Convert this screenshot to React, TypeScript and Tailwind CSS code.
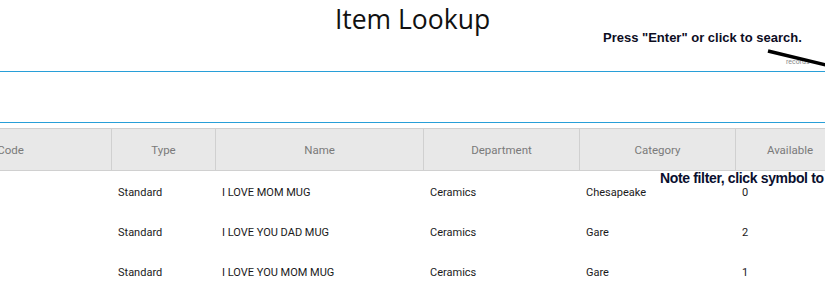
import React from "react";

const columns = [
  { label: "Code", width: "w-[202px]" },
  { label: "Type", width: "w-[104px]" },
  { label: "Name", width: "w-[208px]" },
  { label: "Department", width: "w-[156px]" },
  { label: "Category", width: "w-[156px]" },
  { label: "Available", width: "w-[108px]" },
];

const rows = [
  { code: "", type: "Standard", name: "I LOVE MOM MUG", dept: "Ceramics", cat: "Chesapeake", avail: "0" },
  { code: "", type: "Standard", name: "I LOVE YOU DAD MUG", dept: "Ceramics", cat: "Gare", avail: "2" },
  { code: "", type: "Standard", name: "I LOVE YOU MOM MUG", dept: "Ceramics", cat: "Gare", avail: "1" },
];

export default function App() {
  return (
    <div className="relative h-[301px] w-[825px] overflow-hidden bg-white font-['Roboto',sans-serif]">
      {/* title + hint */}
      <div className="relative h-[72px] border-b border-[#289fd8]">
        <h1 className="pt-[3px] text-center font-['Open_Sans',sans-serif] text-[26.5px] font-medium leading-[32px] text-[#111]">
          Item Lookup
        </h1>
        <p className="absolute left-[603px] top-[30px] font-['Liberation_Sans',Arial,sans-serif] text-[13px] font-bold leading-[16px] text-[#0d0d1f]">
          Press "Enter" or click to search.
        </p>
        <span className="absolute left-[786px] top-[58px] text-[7px] leading-[8px] text-[#888]">records</span>
        <svg className="absolute left-0 top-0" width="825" height="72" viewBox="0 0 825 72">
          <line x1="768" y1="51" x2="826" y2="65" stroke="#000" strokeWidth="3.5" />
        </svg>
      </div>

      {/* search field area */}
      <div className="h-[51px] border-b border-[#289fd8]" />

      {/* grid */}
      <div className="ml-[-90px] mt-[5px]">
        <div className="flex h-[43px] border-y border-[#d0d0d0] bg-[#e8e8e8]">
          {columns.map((c, i) => (
            <div
              key={c.label}
              className={`${c.width} flex shrink-0 items-center justify-center pt-[3px] text-[11.5px] text-[#7a7a7a] ${
                i < columns.length - 1 ? "border-r border-[#d0d0d0]" : ""
              }`}
            >
              {c.label}
            </div>
          ))}
        </div>
        <div className="pt-[2px]">
          {rows.map((r, i) => (
            <div key={i} className="flex h-[40px] items-center text-[11px] text-[#1a1a1a]">
              <div className="w-[202px] shrink-0 pl-[6px]">{r.code}</div>
              <div className="w-[104px] shrink-0 pl-[6px]">{r.type}</div>
              <div className="w-[208px] shrink-0 pl-[6px]">{r.name}</div>
              <div className="w-[156px] shrink-0 pl-[6px]">{r.dept}</div>
              <div className="w-[156px] shrink-0 pl-[6px]">{r.cat}</div>
              <div className="w-[108px] shrink-0 pl-[6px]">{r.avail}</div>
            </div>
          ))}
        </div>
      </div>

      <p className="absolute left-[660px] top-[170px] whitespace-nowrap font-['Liberation_Sans',Arial,sans-serif] text-[14px] font-bold leading-[16px] tracking-[-0.35px] text-[#0a0f2e]">
        Note filter, click symbol to
      </p>
    </div>
  );
}
